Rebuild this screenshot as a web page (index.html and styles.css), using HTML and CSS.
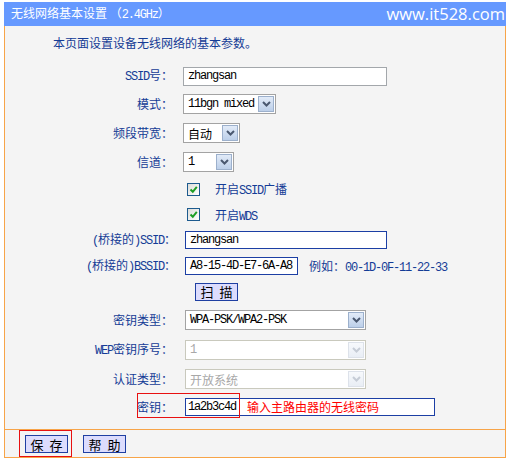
FILE: index.html
```html
<!DOCTYPE html>
<html lang="zh-CN">
<head>
<meta charset="utf-8">
<title>无线网络基本设置</title>
<link rel="stylesheet" href="styles.css">
</head>
<body>
<div class="panel">
  <div class="header">
    <span class="title">无线网络基本设置 （<span class="mono">2.4GHz</span>）</span>
    <span class="mark">www.it528.com</span>
  </div>
  <div class="content">
    <p class="desc">本页面设置设备无线网络的基本参数。</p>
    <div class="form">
      <span class="lbl"><span class="mono">SSID</span>号：</span>
      <div class="ctl"><div class="input w-ssid mono">zhangsan</div></div>

      <span class="lbl">模式：</span>
      <div class="ctl">
        <div class="select w-mode"><span class="sel-text mono">11bgn mixed</span><span class="arrow"><svg width="9" height="6" viewBox="0 0 9 6"><path d="M1 1 L4.5 4.5 L8 1" fill="none" stroke="#4a5870" stroke-width="2"/></svg></span></div>
      </div>

      <span class="lbl">频段带宽：</span>
      <div class="ctl">
        <div class="select w-band"><span class="sel-text">自动</span><span class="arrow"><svg width="9" height="6" viewBox="0 0 9 6"><path d="M1 1 L4.5 4.5 L8 1" fill="none" stroke="#4a5870" stroke-width="2"/></svg></span></div>
      </div>

      <span class="lbl">信道：</span>
      <div class="ctl">
        <div class="select w-chan"><span class="sel-text mono">1</span><span class="arrow"><svg width="9" height="6" viewBox="0 0 9 6"><path d="M1 1 L4.5 4.5 L8 1" fill="none" stroke="#4a5870" stroke-width="2"/></svg></span></div>
      </div>

      <span class="lbl"></span>
      <div class="ctl check-row">
        <span class="checkbox"><svg width="11" height="11" viewBox="0 0 11 11"><path d="M2.5 5.5 L4.8 7.8 L8.8 2.8" fill="none" stroke="#1e9e24" stroke-width="2"/></svg></span>
        <span class="check-label">开启<span class="mono">SSID</span>广播</span>
      </div>

      <span class="lbl"></span>
      <div class="ctl check-row">
        <span class="checkbox"><svg width="11" height="11" viewBox="0 0 11 11"><path d="M2.5 5.5 L4.8 7.8 L8.8 2.8" fill="none" stroke="#1e9e24" stroke-width="2"/></svg></span>
        <span class="check-label">开启<span class="mono">WDS</span></span>
      </div>

      <span class="lbl lbl-wide"><span class="mono">(</span>桥接的<span class="mono">)SSID</span>：</span>
      <div class="ctl"><div class="input input-blue w-bssid-name mono">zhangsan</div></div>

      <span class="lbl lbl-wide"><span class="mono">(</span>桥接的<span class="mono">)BSSID</span>：</span>
      <div class="ctl">
        <div class="input input-blue w-bssid mono">A8-15-4D-E7-6A-A8</div>
        <span class="example">例如：<span class="mono">00-1D-0F-11-22-33</span></span>
      </div>

      <span class="lbl"></span>
      <div class="ctl"><button class="btn btn-scan">扫 描</button></div>

      <span class="lbl">密钥类型：</span>
      <div class="ctl">
        <div class="select w-wide"><span class="sel-text mono">WPA-PSK/WPA2-PSK</span><span class="arrow"><svg width="9" height="6" viewBox="0 0 9 6"><path d="M1 1 L4.5 4.5 L8 1" fill="none" stroke="#4a5870" stroke-width="2"/></svg></span></div>
      </div>

      <span class="lbl"><span class="mono">WEP</span>密钥序号：</span>
      <div class="ctl">
        <div class="select w-wide disabled"><span class="sel-text mono">1</span><span class="arrow"><svg width="9" height="6" viewBox="0 0 9 6"><path d="M1 1 L4.5 4.5 L8 1" fill="none" stroke="#c6ccd6" stroke-width="2"/></svg></span></div>
      </div>

      <span class="lbl">认证类型：</span>
      <div class="ctl">
        <div class="select w-wide disabled"><span class="sel-text">开放系统</span><span class="arrow"><svg width="9" height="6" viewBox="0 0 9 6"><path d="M1 1 L4.5 4.5 L8 1" fill="none" stroke="#c6ccd6" stroke-width="2"/></svg></span></div>
      </div>

      <span class="lbl lbl-key">密钥：</span>
      <div class="ctl ctl-key">
        <div class="key-box"><span class="key-value mono">1a2b3c4d</span><span class="key-hint">输入主路由器的无线密码</span></div>
      </div>
      <span class="hl-key"></span>
    </div>
  </div>
  <div class="footer">
    <span class="hl-save"><button class="btn">保 存</button></span>
    <button class="btn btn-help">帮 助</button>
  </div>
</div>
</body>
</html>
```

FILE: styles.css
```css
* { box-sizing: border-box; }

html, body {
  margin: 0;
  padding: 0;
  background: #ffffff;
}

body {
  padding-top: 2px;
  font-family: "Noto Sans CJK SC", "Liberation Sans", sans-serif;
  font-size: 12px;
  color: #143c96;
}

.mono {
  font-family: "Liberation Mono", "Noto Sans CJK SC", monospace;
  font-size: 12px;
  letter-spacing: -1.2px;
}

.panel {
  margin-left: 4px;
  width: 502px;
}

.header {
  height: 24px;
  background: #6699ff;
  color: #ffffff;
  display: flex;
  align-items: center;
  justify-content: space-between;
  padding: 0 1px 0 7px;
}

.title {
  font-size: 12px;
  line-height: 1;
}

.mark {
  font-family: "Open Sans", sans-serif;
  font-size: 16.5px;
  line-height: 1;
  padding-top: 1px;
}

.content {
  height: 404px;
  background: #f4f4f4;
  border-left: 1px solid #f7a448;
  border-right: 1px solid #f7a448;
  border-bottom: 1px solid #f7a448;
  padding-top: 7px;
}

.desc {
  margin: 0 0 10px 48px;
  height: 20px;
  line-height: 20px;
}

.form {
  display: grid;
  grid-template-columns: 168px 1fr;
  grid-template-rows: 26px 29px 30px 28px 26px 25px 26px 25px 27px 30px 30px 28px 27px;
  column-gap: 11px;
  align-items: center;
}

.lbl {
  text-align: right;
  white-space: nowrap;
  line-height: 16px;
}

.lbl-wide {
  margin-right: -3px;
}

.ctl {
  display: flex;
  align-items: center;
  min-width: 0;
}

.lbl-key {
  grid-row: 13;
  grid-column: 1;
}

.ctl-key {
  grid-row: 13;
  grid-column: 2;
}

.input {
  height: 19px;
  background: #ffffff;
  border: 1px solid #a3a7ab;
  color: #000000;
  padding-left: 4px;
  display: flex;
  align-items: center;
  white-space: nowrap;
}

.input-blue {
  height: 18px;
  border: 1px solid #1c3fa4;
  margin-left: 1px;
}

.w-ssid { width: 204px; margin-left: -1px; }
.w-bssid-name { width: 202px; }
.w-bssid { width: 113px; }

.example {
  margin-left: 11px;
  white-space: nowrap;
}

.select {
  height: 20px;
  display: flex;
  align-items: stretch;
  background: #ffffff;
  border: 1px solid #a3a3a3;
  padding: 1px;
  color: #000000;
  margin-left: -1px;
}

.w-mode { width: 93px; }
.w-band { width: 57px; }
.w-chan { width: 51px; }
.w-wide { width: 181px; margin-left: 1px; }

.sel-text {
  flex: 1;
  padding-left: 3px;
  display: flex;
  align-items: center;
  white-space: nowrap;
  overflow: hidden;
}

.arrow {
  width: 16px;
  border: 1px solid #9cb0cc;
  background: linear-gradient(#e2ebf8, #bccfe9);
  display: flex;
  align-items: center;
  justify-content: center;
}

.disabled {
  border-color: #c9c9bd;
  color: #a8a8a8;
}

.disabled .arrow {
  border-color: #dde2ea;
  background: linear-gradient(#f7f9fc, #e9eef5);
}

.check-row {
  padding-left: 3px;
}

.checkbox {
  width: 13px;
  height: 13px;
  border: 1px solid #1c5a8e;
  background: linear-gradient(135deg, #dcdcd8, #ffffff);
  display: flex;
  align-items: center;
  justify-content: center;
}

.check-label {
  margin-left: 15px;
  white-space: nowrap;
}

.btn {
  font-family: "Noto Sans CJK SC", sans-serif;
  font-size: 13px;
  line-height: 1;
  word-spacing: 3px;
  color: #000000;
  background: #dcdcfd;
  border: 1px solid #1f3fa2;
  width: 43px;
  height: 18px;
  padding: 0;
  display: flex;
  align-items: center;
  justify-content: center;
}

.btn-scan {
  margin-left: 11px;
}

.key-box {
  width: 250px;
  height: 18px;
  margin-left: 1px;
  border: 1px solid #1c3fa4;
  background: #ffffff;
  display: flex;
  align-items: center;
  white-space: nowrap;
}

.key-value {
  color: #000000;
  padding-left: 2px;
  width: 53px;
}

.key-hint {
  color: #ff0000;
  margin-left: 8px;
}

.hl-key {
  grid-row: 13;
  grid-column: 1 / 3;
  margin-left: 132px;
  width: 103px;
  height: 25px;
  border: 1px solid #e81010;
  align-self: center;
  margin-top: -3px;
}

.footer {
  height: 28px;
  background: #f4f4f4;
  border-left: 1px solid #f7a448;
  border-right: 1px solid #f7a448;
  border-bottom: 1px solid #f7a448;
  padding-left: 14px;
  display: flex;
  align-items: flex-start;
}

.hl-save {
  display: flex;
  border: 1px solid #e81010;
  padding: 4px 3px 3px 5px;
}

.btn-help {
  margin-left: 11px;
  margin-top: 5px;
}
```
